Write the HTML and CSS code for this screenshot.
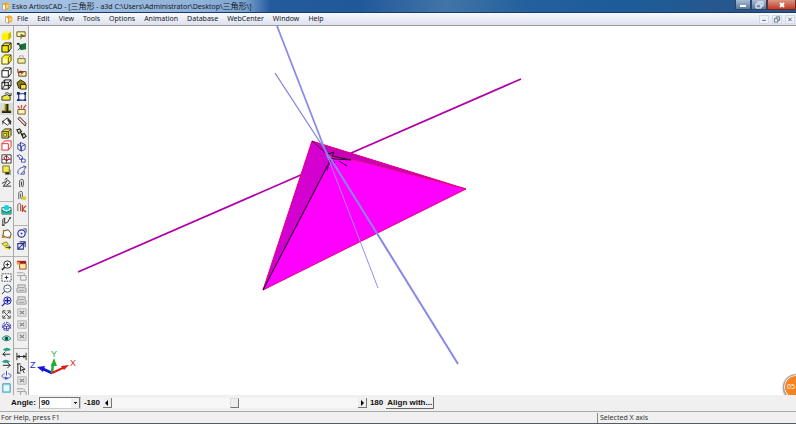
FILE: index.html
```html
<!DOCTYPE html>
<html lang="en">
<head>
<meta charset="utf-8">
<title>Esko ArtiosCAD</title>
<link rel="stylesheet" href="styles.css">
</head>
<body>
<svg class="defs" aria-hidden="true">
  <symbol id="logo" viewBox="0 0 12 12"><path d="M2 3l5-2 4 2v6l-5 3-4-2z" fill="#f5a623"/><path d="M2 3l4 2v7l-4-2z" fill="#fff" stroke="#8c6b3b" stroke-width=".6"/><path d="M7 5l3-1v4l-3 1z" fill="#ffd36b"/></symbol>
  <symbol id="solid" viewBox="0 0 12 12"><path d="M1 4l3-2h7v6l-3 3H1z" fill="#ffef00"/><path d="M8 4l3-2v6l-3 3z" fill="#c9b400"/><path d="M1 4l3-2h7L8 4z" fill="#fff35c"/></symbol>
  <symbol id="solidline" viewBox="0 0 12 12"><path d="M1 4l3-3h7v6l-3 4H1zM1 4h7v7M8 4l3-3" fill="#f4e800" stroke="#111"/></symbol>
  <symbol id="paleline" viewBox="0 0 12 12"><path d="M1 4l3-3h7v6l-3 4H1zM8 4v7M8 4l3-3" fill="#fff200" stroke="#554f00"/><path d="M2 5h5v5H2z" fill="#fffbd0"/></symbol>
  <symbol id="wire" viewBox="0 0 12 12"><path d="M1 4l3-3h7v6l-3 4H1zM1 4h7v7M8 4l3-3" fill="#fff" stroke="#111"/></symbol>
  <symbol id="wirefull" viewBox="0 0 12 12"><path d="M1 4l3-3h7v6l-3 4H1zM1 4h7v7M8 4l3-3M4 1v6h7M4 7l-3 4" fill="none" stroke="#111"/></symbol>
  <symbol id="fold" viewBox="0 0 12 12"><path d="M1 6l6-2 3 2v4H1z" fill="#eeea37" stroke="#333"/><path d="M4 3c3-2 5-1 6 2M8 5h3V2" fill="none" stroke="#222"/></symbol>
  <symbol id="stand" viewBox="0 0 12 12"><path d="M4 1h4v7h3v3H1V8h3z" fill="#998b00"/><path d="M6 1h2v8H6zM1 9h10v2H1z" fill="#222"/></symbol>
  <symbol id="bucket" viewBox="0 0 12 12"><path d="M2 6l5-4 4 4-4 4z" fill="#fff" stroke="#222"/><path d="M7 2l4 4v4L7 5zM1 5l2 1-1 4z" fill="#333"/></symbol>
  <symbol id="boxin" viewBox="0 0 12 12"><path d="M1 4l3-3h7v7l-3 3H1zM1 4h7v7M8 4l3-3" fill="#e7df24" stroke="#333"/><path d="M3 6h3v3H3z" fill="#fbf6a0" stroke="#6b661a"/></symbol>
  <symbol id="redbox" viewBox="0 0 12 12"><path d="M1 4l3-3h7v6l-3 4H1zM1 4h7v7" fill="#fff" stroke="#e8252b"/></symbol>
  <symbol id="section" viewBox="0 0 12 12"><path d="M1 2h10v9H1z" fill="#fff" stroke="#332"/><path d="M1 7h10M6 2v9" stroke="#d8193b"/><path d="M3 5l3-2 3 3-3 3z" fill="none" stroke="#333"/></symbol>
  <symbol id="shadow" viewBox="0 0 12 12"><path d="M4 5h7v6H4z" fill="#a8a695"/><path d="M2 1h7v7H2z" fill="#f4e94c" stroke="#78701d"/><path d="M5 8h4v2H5z" fill="#222"/></symbol>
  <symbol id="lamp" viewBox="0 0 12 12"><path d="M2 10h9M3 10l4-7 3 3-4 3M4 3l3-2M1 7l4-2" fill="none" stroke="#222"/></symbol>
  <symbol id="image" viewBox="0 0 12 12"><path d="M1 4h10v7H1z" fill="#fff" stroke="#0a7767"/><circle cx="6" cy="4" r="3" fill="#13d5e5"/><path d="M1 11V7l5 2 5-2v4z" fill="#24b79a"/><path d="M1 7l5 2 5-2" fill="none" stroke="#055b49"/></symbol>
  <symbol id="path" viewBox="0 0 12 12"><path d="M2 10V4l2-2v6l3-1 3-5" fill="none" stroke="#222"/><path d="M1 9h3v2H1zM9 1h2v2H9z" fill="#555"/></symbol>
  <symbol id="poly" viewBox="0 0 12 12"><path d="M2 9l1-6 5-1 3 4-1 5z" fill="#fff" stroke="#442"/><path d="M1 8h3v3H1zM2 2h2v2H2zM8 9h3v2H8z" fill="#ce811a"/></symbol>
  <symbol id="key" viewBox="0 0 12 12"><path d="M1 4l5-2 2 3-4 2z" fill="#efe838" stroke="#888520"/><path d="M4 7h6v3H4z" fill="#f6ee36"/><path d="M5 8h6M9 6v4" stroke="#333"/></symbol>
  <symbol id="zoomin" viewBox="0 0 12 12"><circle cx="7" cy="5" r="4" fill="#fff" stroke="#222"/><path d="M4 8l-3 3" stroke="#222" stroke-width="1.6"/><path d="M5 5h4M7 3v4" stroke="#222"/></symbol>
  <symbol id="fit" viewBox="0 0 12 12"><path d="M1 2h10v8H1z" fill="#fff" stroke="#444" stroke-dasharray="2 1"/><path d="M4 6h4M6 4v4" stroke="#222"/></symbol>
  <symbol id="zoomout" viewBox="0 0 12 12"><circle cx="7" cy="5" r="4" fill="#fff" stroke="#344a68"/><path d="M4 8l-3 3" stroke="#222"/><path d="M5 5h4" stroke="#8a94a8"/></symbol>
  <symbol id="zoomall" viewBox="0 0 12 12"><circle cx="7" cy="5" r="4" fill="#dfe3ff" stroke="#1717a0"/><path d="M4 8l-3 3M4 5h6M7 2v6" stroke="#1717a0" stroke-width="1.4"/></symbol>
  <symbol id="spin" viewBox="0 0 12 12"><path d="M2 5V2h3M7 2h3v3M10 7v3H7M5 10H2V7M3 3l6 6M9 3L7 5M5 7L3 9" fill="none" stroke="#333"/></symbol>
  <symbol id="orbit" viewBox="0 0 12 12"><circle cx="6" cy="6" r="4.5" fill="#fff" stroke="#2525a8" stroke-dasharray="3 1"/><path d="M3 5l3-2 3 2v3L6 9 3 8zM3 5l3 1 3-1M6 6v3" fill="none" stroke="#2525a8"/></symbol>
  <symbol id="eye" viewBox="0 0 12 12"><path d="M1 6q5-6 10 0-5 5-10 0z" fill="#b5eee0" stroke="#08776a"/><circle cx="6" cy="6" r="2" fill="#064e42"/></symbol>
  <symbol id="eyeleft" viewBox="0 0 12 12"><path d="M2 4q4-4 9 0-5 3-9 0z" fill="#2ca18f"/><path d="M10 9H2M5 6L2 9l3 2" fill="none" stroke="#222"/></symbol>
  <symbol id="eyedown" viewBox="0 0 12 12"><path d="M1 4q4-4 9 0-5 3-9 0z" fill="#2ca18f"/><path d="M2 8h8M7 5l3 3-3 3" fill="none" stroke="#122"/></symbol>
  <symbol id="rotate" viewBox="0 0 12 12"><path d="M4 4C-1 6 1 9 6 9s7-4 2-5M6 1v5" fill="none" stroke="#3b48b9"/><path d="M4 7l4 2-3 2z" fill="#3b48b9"/></symbol>
  <symbol id="pane" viewBox="0 0 12 12"><path d="M2 2h8v9H2z" fill="#e5faff" stroke="#258bae"/><path d="M3 3h6M1 11h10" stroke="#68cbe3"/></symbol>

  <symbol id="select" viewBox="0 0 12 12"><path d="M1 2h9v5H1z" fill="#fff8b4" stroke="#5d501c"/><path d="M5 4l5 2-3 1-2 4z" fill="#7b681d"/></symbol>
  <symbol id="green" viewBox="0 0 12 12"><path d="M1 1h3v2H1z" fill="#333"/><path d="M3 3l8-2v7l-6 1z" fill="#117340"/><path d="M2 2l4 4M2 9l4-4" stroke="#333"/></symbol>
  <symbol id="lock" viewBox="0 0 12 12"><path d="M2 5h8v5H2z" fill="#f8ec9c" stroke="#69612f"/><path d="M4 5V2h4v3" fill="none" stroke="#aaa"/></symbol>
  <symbol id="part" viewBox="0 0 12 12"><path d="M3 5h8v5H3z" fill="#fff3b0" stroke="#4f3e19"/><path d="M2 2v4h5M5 4l3 2-3 2" fill="none" stroke="#8e271e"/></symbol>
  <symbol id="stack" viewBox="0 0 12 12"><path d="M1 4l4-3 5 3v6H3z" fill="#8e7e00" stroke="#222"/><path d="M5 6h6v5H5z" fill="#ffe42d" stroke="#222"/></symbol>
  <symbol id="group" viewBox="0 0 12 12"><path d="M3 3h7v7H3z" fill="#fff" stroke="#16338f" stroke-width="1.3"/><path d="M1 1h3v3H1zM9 1h2v3H9zM1 9h3v2H1zM9 9h2v2H9z" fill="#142662"/></symbol>
  <symbol id="explode" viewBox="0 0 12 12"><path d="M2 6h8v5H2z" fill="#fff3ba" stroke="#71551d"/><path d="M2 2l2 3M6 1v4M11 1L8 5" stroke="#dd4930" stroke-width="1.4"/></symbol>
  <symbol id="pen" viewBox="0 0 12 12"><path d="M2 3l2-2 7 7-1 3z" fill="#d6a8a0" stroke="#4a3030"/><path d="M4 3l5 5" stroke="#fff"/></symbol>
  <symbol id="link" viewBox="0 0 12 12"><path d="M1 2l3-1 2 3-3 2zM6 7l3-1 2 3-3 2zM4 4l4 4" fill="#eeeab0" stroke="#222" stroke-width="1.2"/></symbol>
  <symbol id="bluecube" viewBox="0 0 12 12"><path d="M2 4l4-2 4 2v5l-4 2-4-2zM2 4l4 2 4-2M6 6v5M5 1v10" fill="none" stroke="#4147ad"/></symbol>
  <symbol id="bluemove" viewBox="0 0 12 12"><path d="M1 3l3-1 3 2v3H4V5zM6 6l4 1v3H6z" fill="#fff" stroke="#4147ad"/></symbol>
  <symbol id="blueturn" viewBox="0 0 12 12"><path d="M3 10c-3-3 1-8 7-8M8 1l3 1-2 3M5 10l4-4v4z" fill="none" stroke="#4147ad"/></symbol>
  <symbol id="clip" viewBox="0 0 12 12"><path d="M4 10V3c1-2 4-2 4 0v5c0 2-2 2-2 0V4" fill="none" stroke="#444"/></symbol>
  <symbol id="clipadd" viewBox="0 0 12 12"><path d="M3 10V3c1-2 4-2 4 0v5c0 2-2 2-2 0V4" fill="none" stroke="#555"/><path d="M7 7h4v4H7z" fill="#ddd21d"/></symbol>
  <symbol id="clipcut" viewBox="0 0 12 12"><path d="M2 10V3c1-2 3-2 3 0v7" fill="none" stroke="#7b5044"/><path d="M7 3v8M11 4L7 8l4 3" fill="none" stroke="#c63d2d" stroke-width="1.4"/></symbol>
  <symbol id="turncw" viewBox="0 0 12 12"><circle cx="6" cy="6" r="4" fill="#f4f5ff" stroke="#2d36a5" stroke-width="1.3"/><path d="M8 1h3v4" fill="none" stroke="#2d36a5"/><circle cx="6" cy="6" r="1" fill="#2d36a5"/></symbol>
  <symbol id="turnbox" viewBox="0 0 12 12"><path d="M2 4h6v6H2zM4 2h6v6M2 10l8-8" fill="#fff" stroke="#27318c" stroke-width="1.2"/></symbol>
  <symbol id="redlayer" viewBox="0 0 12 12"><path d="M1 2h10v3H1z" fill="#a61f1e"/><path d="M4 5h7v6H4z" fill="#fff0a0" stroke="#a73a2c"/><path d="M1 3h3v3H1z" fill="#ff9b3a"/></symbol>
  <symbol id="graycopy" viewBox="0 0 12 12"><path d="M1 2h7M1 5h4M5 5h6v5H5z" fill="none" stroke="#999"/><path d="M9 2v3" stroke="#aaa"/></symbol>
  <symbol id="graypanel" viewBox="0 0 12 12"><path d="M2 2h8v4h1v4H1V6h1z" fill="#ddd" stroke="#999"/><path d="M3 5h6M3 8h6" stroke="#999"/></symbol>
  <symbol id="graybox" viewBox="0 0 12 12"><path d="M2 2h9v8H2z" fill="#eee" stroke="#aaa"/><path d="M4 4l5 4M9 4L4 8" stroke="#888" stroke-width="1.4"/></symbol>
  <symbol id="measure" viewBox="0 0 12 12"><path d="M1 2v8M11 2v8M1 6h10" stroke="#222"/><path d="M4 4L1 6l3 2M8 4l3 2-3 2" fill="#222"/></symbol>
  <symbol id="dimension" viewBox="0 0 12 12"><path d="M2 1v10M1 1h4M1 11h4M5 3v6l2-2 2 4M5 3l5 4H7" fill="none" stroke="#222"/></symbol>
</svg>

<div class="window">
  <header class="titlebar">
    <svg class="logo"><use href="#logo"/></svg>
    <h1 class="caption">Esko ArtiosCAD - [<span lang="zh">三角形</span> - a3d C:\Users\Administrator\Desktop\<span lang="zh">三角形</span>\]</h1>
    <div class="controls">
      <button class="control" aria-label="Minimize"><svg viewBox="0 0 12 8"><path d="M3 4h6v2H3z" fill="#fff"/></svg></button>
      <button class="control" aria-label="Restore"><svg viewBox="0 0 12 8"><path d="M5 2V1h5v4H8M3 3h5v4H3z" fill="none" stroke="#fff"/></svg></button>
      <button class="control close" aria-label="Close"><svg viewBox="0 0 12 8"><path d="M4 2l4 4M8 2L4 6" stroke="#fff" stroke-width="2"/></svg></button>
    </div>
  </header>

  <nav class="menubar">
    <svg class="logo"><use href="#logo"/></svg>
    <button>File</button><button>Edit</button><button>View</button><button>Tools</button><button>Options</button><button>Animation</button><button>Database</button><button>WebCenter</button><button>Window</button><button>Help</button>
    <div class="doc-controls">
      <button aria-label="Minimize document"><svg viewBox="0 0 8 8"><path d="M2 5h4" stroke="#456"/></svg></button>
      <button aria-label="Restore document"><svg viewBox="0 0 8 8"><path d="M3 2V1h4v4H5M1 3h4v4H1z" fill="none" stroke="#567"/></svg></button>
      <button aria-label="Close document"><svg viewBox="0 0 8 8"><path d="M2 2l4 4M6 2L2 6" stroke="#456"/></svg></button>
    </div>
  </nav>

  <main class="workspace">
    <div class="toolbar">
      <div class="tools views">
        <button aria-label="Solid"><svg><use href="#solid"/></svg></button>
        <button aria-label="Solid with lines"><svg><use href="#solidline"/></svg></button>
        <button aria-label="Transparent"><svg><use href="#paleline"/></svg></button>
        <button aria-label="Hidden line"><svg><use href="#wire"/></svg></button>
        <button aria-label="Wireframe"><svg><use href="#wirefull"/></svg></button>
        <button aria-label="Fold"><svg><use href="#fold"/></svg></button>
        <button class="pressed" aria-label="Thickness"><svg><use href="#stand"/></svg></button>
        <button aria-label="Fill"><svg><use href="#bucket"/></svg></button>
        <button aria-label="Inside box"><svg><use href="#boxin"/></svg></button>
        <button aria-label="Outline"><svg><use href="#redbox"/></svg></button>
        <button aria-label="Section"><svg><use href="#section"/></svg></button>
        <button aria-label="Shadow"><svg><use href="#shadow"/></svg></button>
        <button aria-label="Light"><svg><use href="#lamp"/></svg></button>
      </div>
      <div class="tools export">
        <button aria-label="Background"><svg><use href="#image"/></svg></button>
        <button aria-label="Path"><svg><use href="#path"/></svg></button>
        <button aria-label="Polygon"><svg><use href="#poly"/></svg></button>
        <button aria-label="Properties"><svg><use href="#key"/></svg></button>
      </div>
      <div class="tools zooming">
        <button aria-label="Zoom in"><svg><use href="#zoomin"/></svg></button>
        <button aria-label="Scale to fit"><svg><use href="#fit"/></svg></button>
        <button aria-label="Zoom out"><svg><use href="#zoomout"/></svg></button>
        <button aria-label="Zoom all"><svg><use href="#zoomall"/></svg></button>
        <button aria-label="Spin"><svg><use href="#spin"/></svg></button>
        <button aria-label="Orbit"><svg><use href="#orbit"/></svg></button>
        <button aria-label="View angle"><svg><use href="#eye"/></svg></button>
        <button aria-label="Previous view"><svg><use href="#eyeleft"/></svg></button>
        <button aria-label="Next view"><svg><use href="#eyedown"/></svg></button>
        <button aria-label="Rotate view"><svg><use href="#rotate"/></svg></button>
        <button aria-label="View window"><svg><use href="#pane"/></svg></button>
      </div>
    </div>

    <div class="toolbar second">
      <div class="tools editing">
        <button aria-label="Select"><svg><use href="#select"/></svg></button>
        <button aria-label="Select design"><svg><use href="#green"/></svg></button>
        <button aria-label="Lock"><svg><use href="#lock"/></svg></button>
        <button aria-label="Move part"><svg><use href="#part"/></svg></button>
        <button aria-label="Stack"><svg><use href="#stack"/></svg></button>
        <button aria-label="Group"><svg><use href="#group"/></svg></button>
        <button aria-label="Ungroup"><svg><use href="#explode"/></svg></button>
        <button aria-label="Draw"><svg><use href="#pen"/></svg></button>
        <button aria-label="Join"><svg><use href="#link"/></svg></button>
        <button aria-label="Rotate part"><svg><use href="#bluecube"/></svg></button>
        <button aria-label="Copy part"><svg><use href="#bluemove"/></svg></button>
        <button aria-label="Turn part"><svg><use href="#blueturn"/></svg></button>
        <button aria-label="Attach"><svg><use href="#clip"/></svg></button>
        <button aria-label="Add attachment"><svg><use href="#clipadd"/></svg></button>
        <button aria-label="Remove attachment"><svg><use href="#clipcut"/></svg></button>
      </div>
      <div class="tools turning">
        <button aria-label="Turn clockwise"><svg><use href="#turncw"/></svg></button>
        <button aria-label="Turn box"><svg><use href="#turnbox"/></svg></button>
      </div>
      <div class="tools layers">
        <button aria-label="Layer"><svg><use href="#redlayer"/></svg></button>
        <button disabled aria-label="Copy layer"><svg><use href="#graycopy"/></svg></button>
        <button disabled aria-label="Panel"><svg><use href="#graypanel"/></svg></button>
        <button disabled aria-label="Move panel"><svg><use href="#graypanel"/></svg></button>
        <button disabled aria-label="Delete panel"><svg><use href="#graybox"/></svg></button>
        <button disabled aria-label="Crop panel"><svg><use href="#graybox"/></svg></button>
        <button disabled aria-label="Hide panel"><svg><use href="#graybox"/></svg></button>
      </div>
      <div class="tools measuring">
        <button aria-label="Distance"><svg><use href="#measure"/></svg></button>
        <button aria-label="Dimension"><svg><use href="#dimension"/></svg></button>
        <button disabled aria-label="Annotation"><svg><use href="#graybox"/></svg></button>
        <button disabled aria-label="Note"><svg><use href="#graycopy"/></svg></button>
      </div>
    </div>

    <div class="canvas">
      <svg class="scene" viewBox="29 26 767 369" preserveAspectRatio="xMinYMin meet" role="img" aria-label="3D view of a folded triangle">
        <path d="M78 272L521 79" stroke="#b000a8" stroke-width="1.7"/>
        <path d="M312 141L466 189 263 290z" fill="#f0f"/>
        <path d="M312 141l20 15-69 134z" fill="#d400cf"/>
        <path d="M312 141l154 48-112-29-24-4z" fill="#c800b8"/>
        <path d="M354 160l112 29M330 157l24 3" stroke="#f0108a" fill="none"/>
        <path d="M312 141l154 48-203 101z" fill="none" stroke="#e8007c"/>
        <path d="M329 163l-66 127" stroke="#310037" stroke-width="1.2"/>
        <path d="M312 141l17 15v8M331 158l-4 13" fill="none" stroke="#5c0068"/>
        <path d="M328 154l6-2-2 4 19 4-16-1-5-1 5 5M339 161l8 5" fill="none" stroke="#26002d"/>
        <path d="M277 26L329 160" stroke="#8b8be8" stroke-width="1.8"/>
        <path d="M329 160L378 288" stroke="#9a8bef"/>
        <path d="M275 73l54 83" stroke="#8383e0" stroke-width="1.3"/>
        <path d="M329 156L458 364" stroke="#8787ea" stroke-width="2"/>
        <g class="axes">
          <path d="M52 373L41 368" stroke="#1515d5" stroke-width="3"/><path d="M37 367l8-1-2 6z" fill="#1515d5"/>
          <path d="M52 373l1-10" stroke="#1fae34" stroke-width="2.5"/><path d="M54 358l3 8h-6z" fill="#1fae34"/>
          <path d="M52 373l13-6" stroke="#e01b1b" stroke-width="2"/><path d="M69 365l-8 1 3 4z" fill="#e01b1b"/>
          <text x="30" y="368" fill="#2020d8">Z</text><text x="51" y="357" fill="#1fae34">Y</text><text x="70" y="366" fill="#e01b1b">X</text>
        </g>
      </svg>
      <button class="badge">05</button>
    </div>
  </main>

  <form class="anglebar">
    <label for="angle">Angle:</label>
    <select id="angle"><option>90</option></select>
    <label for="slider">-180</label>
    <div class="slider">
      <button type="button" class="step" aria-label="Decrease"><svg viewBox="0 0 8 8"><path d="M5 1v6L2 4z"/></svg></button>
      <input id="slider" type="range" min="-180" max="180" value="0">
      <button type="button" class="step" aria-label="Increase"><svg viewBox="0 0 8 8"><path d="M3 1v6l3-3z"/></svg></button>
    </div>
    <span>180</span>
    <button type="button" class="align">Align with...</button>
  </form>

  <footer class="statusbar"><span class="hint">For Help, press F1</span><span class="state">Selected X axis</span></footer>
</div>
</body>
</html>
```
FILE: styles.css
```css
* { box-sizing: border-box; }
body { margin: 0; font: 7px/10px "Noto Sans", "Noto Sans CJK SC", sans-serif; color: #15181f; }
button { margin: 0; padding: 0; border: 0; background: none; font: inherit; color: inherit; }
svg { display: block; }
.defs { position: absolute; width: 0; height: 0; }
.window { display: grid; grid-template-rows: 13px 13px minmax(0, 1fr) 17px 12px; height: 100vh; overflow: hidden; background: #f0f0f0; }

.titlebar { display: flex; align-items: center; gap: 2px; padding-left: 1px; border-bottom: 1px solid #173c6c; background: linear-gradient(90deg, #a9c5e5 0, #8fb2da 200px, #7ba3d0 245px, #255b9d 270px, #20589a 45%, #4175a8 56%, #24609d 66%, #1d5c99 78%, #2d5485 100%); }
.logo { width: 9px; height: 10px; flex: none; }
.caption { margin: 0; font-size: 7px; font-weight: 400; line-height: 12px; white-space: nowrap; }
.caption span { font-size: 8px; }
.controls { display: flex; align-self: flex-start; margin-left: auto; }
.control { display: grid; place-items: center; width: 16px; height: 10px; border: 1px solid #27466d; border-top: 0; background: linear-gradient(#a9bdd3, #58799f); }
.control svg { width: 12px; height: 8px; }
.close { width: 29px; background: linear-gradient(#dc9686, #c13a25); border-color: #6b2a25; }

.menubar { display: flex; align-items: center; gap: 9px; padding-left: 4px; border-bottom: 1px solid #9b9b9f; background: linear-gradient(#f7f9fd, #dce1ee); }
.menubar .logo { margin-right: -5px; }
.doc-controls { display: flex; gap: 3px; margin-left: auto; padding-right: 1px; }
.doc-controls button { width: 10px; height: 9px; border: 1px solid #d3dae7; background: #eef2f9; }
.doc-controls svg { width: 8px; height: 7px; }

.workspace { display: flex; min-height: 0; }
.toolbar { display: flex; flex-direction: column; flex: none; width: 14px; padding-top: 3px; border-right: 1px solid #a9a9a9; background: #f0f0f0; overflow: hidden; }
.second { width: 15px; }
.tools { display: grid; grid-auto-rows: minmax(0, 1fr); flex: none; }
.tools button { display: grid; place-items: center; min-height: 0; }
.tools svg { width: 11px; height: 11px; }
.tools + .tools { border-top: 1px solid #b5b5b5; }
.pressed { background: #dcdcd2; }
.views { height: 172px; padding-bottom: 12px; }
.export { height: 55px; padding: 1px 0 5px; }
.zooming { height: 138px; padding-top: 2px; }
.editing { height: 196px; padding-bottom: 11px; }
.turning { height: 31px; padding: 1px 0 5px; }
.layers { height: 92px; padding: 1px 0 5px; }
.measuring { height: 50px; padding-top: 2px; }

.canvas { position: relative; flex: 1; min-width: 0; background: #fff; overflow: hidden; }
.scene { width: 100%; height: 100%; }
.scene text { font: 9px "Liberation Sans", sans-serif; }
.badge { position: absolute; right: -13px; bottom: -5px; width: 26px; height: 26px; padding-right: 10px; border: 1px solid #a2a2a2; border-radius: 50%; background: #f68220; box-shadow: inset 0 0 0 1px #fff, 0 1px 2px #888; color: #fff; }

.anglebar { display: flex; align-items: center; gap: 3px; padding-left: 11px; border-bottom: 1px solid #a9a9a9; color: #111; font-family: "Liberation Sans", sans-serif; font-size: 8px; font-weight: 700; }
.anglebar select { appearance: none; width: 42px; height: 12px; padding: 0 1px; border: 1px solid #777; border-right-color: #ccc; border-bottom-color: #ccc; border-radius: 0; background: linear-gradient(#222, #222) right 4px top 5px / 1px 1px no-repeat, linear-gradient(#222, #222) right 3px top 4px / 3px 1px no-repeat, linear-gradient(90deg, #f0f0f0 8px, #777 8px) right / 9px 100% no-repeat, #fff; font: inherit; color: inherit; }
.slider { display: flex; align-items: center; width: 264px; background: #f7f7f7; }
.step { width: 9px; height: 10px; border-right: 1px solid #777; border-bottom: 1px solid #777; background: #eee; }
.step svg { width: 8px; height: 8px; }
.slider input { appearance: none; flex: 1; min-width: 0; height: 10px; margin: 0; background: #f7f7f7; }
.slider input::-webkit-slider-thumb { appearance: none; width: 9px; height: 10px; border: 1px solid #ddd; border-right-color: #777; border-bottom-color: #777; background: #eee; }
.align { height: 12px; padding: 0 1px; border-right: 1px solid #666; border-bottom: 1px solid #666; white-space: nowrap; }

.statusbar { display: grid; grid-template-columns: 3fr 1fr; align-items: center; border-bottom: 1px solid #555b62; color: #333; }
.hint { padding-left: 1px; }
.state { padding-left: 2px; border-left: 1px solid #888; }
```
